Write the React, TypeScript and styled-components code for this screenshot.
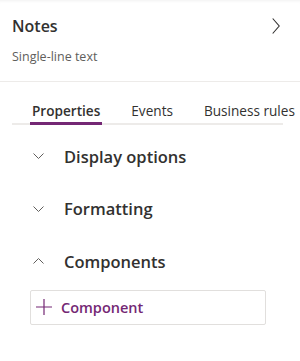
import { ReactElement } from "react";
import styled, { createGlobalStyle } from "styled-components";

const GlobalStyle = createGlobalStyle`
  html, body {
    margin: 0;
    padding: 0;
    background: #ffffff;
  }
  body {
    font-family: "Segoe UI", "Open Sans", "Noto Sans", sans-serif;
    color: #323130;
  }
`;

const Panel = styled.div`
  width: 300px;
  height: 361px;
  overflow: hidden;
  background: #ffffff;
  box-shadow: inset 0 3px 3px -2px rgba(0, 0, 0, 0.06);
`;

const Header = styled.div`
  height: 82px;
  box-sizing: border-box;
  padding: 15px 20px 0 12px;
  border-bottom: 1px solid #edebe9;
`;

const TitleRow = styled.div`
  display: flex;
  align-items: center;
  justify-content: space-between;
`;

const Title = styled.div`
  font-size: 16px;
  font-weight: 600;
  line-height: 22px;
  color: #323130;
`;

const Subtitle = styled.div`
  margin-top: 11px;
  font-size: 12.5px;
  line-height: 18px;
  color: #605e5c;
`;

const TabList = styled.div`
  display: flex;
  gap: 27px;
  margin: 17px 0 0 12px;
  padding-left: 18px;
  border-bottom: 2px solid #edebe9;
  white-space: nowrap;
  width: 271px;
  box-sizing: border-box;
`;

const Tab = styled.div<{ $active?: boolean }>`
  position: relative;
  flex: none;
  padding: 0 2px;
  font-size: 13.6px;
  line-height: 24px;
  height: 24px;
  color: #323130;
  font-weight: ${(p) => (p.$active ? 600 : 400)};

  &::after {
    content: "";
    position: absolute;
    left: 0;
    right: 0;
    bottom: -2px;
    height: 3px;
    background: ${(p) => (p.$active ? "#742774" : "transparent")};
  }
`;

const Sections = styled.div`
  padding-top: 5px;
`;

const SectionRow = styled.div`
  display: flex;
  align-items: center;
  height: 52.5px;
  padding-left: 33px;
`;

const ChevronBox = styled.span`
  display: flex;
  width: 31px;
  color: #605e5c;
`;

const SectionLabel = styled.span`
  font-size: 16.5px;
  font-weight: 600;
  color: #323130;
`;

const AddButton = styled.button`
  display: flex;
  align-items: center;
  gap: 8px;
  margin: 2px 0 0 30px;
  width: 236px;
  height: 35px;
  box-sizing: border-box;
  padding: 0 4px;
  border: 1px solid #e1dfdd;
  border-radius: 2px;
  background: #ffffff;
  font-family: inherit;
  font-size: 14.5px;
  font-weight: 600;
  color: #742774;
`;

function Chevron({ up }: { up?: boolean }): ReactElement {
  return (
    <svg width="11" height="6" viewBox="0 0 11 6" fill="none">
      <path
        d={up ? "M0.5 5.5 L5.5 0.5 L10.5 5.5" : "M0.5 0.5 L5.5 5.5 L10.5 0.5"}
        stroke="currentColor"
        strokeWidth="1"
      />
    </svg>
  );
}

const sections = [
  { label: "Display options", open: false },
  { label: "Formatting", open: false },
  { label: "Components", open: true },
];

export default function App(): ReactElement {
  return (
    <>
      <GlobalStyle />
      <Panel>
        <Header>
          <TitleRow>
            <Title>Notes</Title>
            <svg width="8" height="16" viewBox="0 0 8 16" fill="none">
              <path d="M0.7 0.5 L7.2 8 L0.7 15.5" stroke="#323130" strokeWidth="1.1" />
            </svg>
          </TitleRow>
          <Subtitle>Single-line text</Subtitle>
        </Header>
        <TabList>
          <Tab $active>Properties</Tab>
          <Tab>Events</Tab>
          <Tab>Business rules</Tab>
        </TabList>
        <Sections>
          {sections.map((s) => (
            <SectionRow key={s.label}>
              <ChevronBox>
                <Chevron up={s.open} />
              </ChevronBox>
              <SectionLabel>{s.label}</SectionLabel>
            </SectionRow>
          ))}
        </Sections>
        <AddButton>
          <svg width="18" height="18" viewBox="0 0 18 18" fill="none">
            <path d="M9 1 V17 M1 9 H17" stroke="#742774" strokeWidth="1.2" />
          </svg>
          Component
        </AddButton>
      </Panel>
    </>
  );
}
